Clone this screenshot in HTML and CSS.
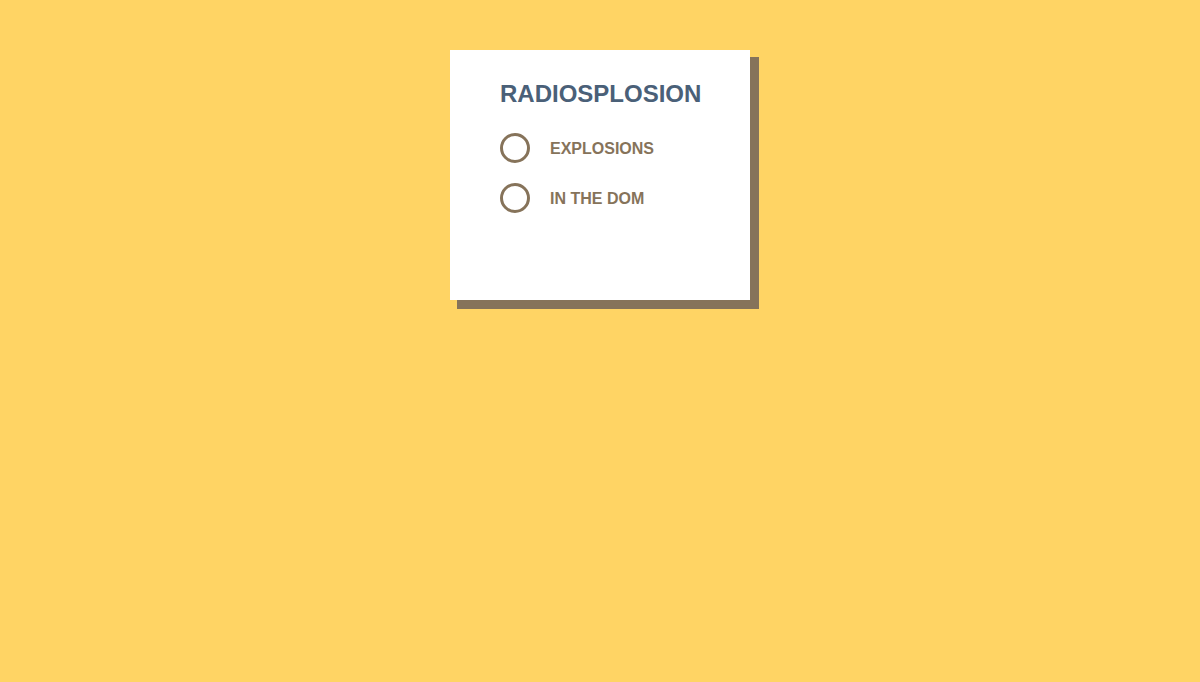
FILE: index.html
```html
<!DOCTYPE html>
<html>
<head>
<meta charset="utf-8">
<link rel="stylesheet" href="styles.css">
</head>
<body>
<div class="page">
  <div class="card">
    <h1 class="title">RADIOSPLOSION</h1>
    <div class="options">
      <label class="option"><span class="radio"></span><span class="label">EXPLOSIONS</span></label>
      <label class="option"><span class="radio"></span><span class="label">IN THE DOM</span></label>
    </div>
  </div>
</div>
</body>
</html>
```
FILE: styles.css
```css
html, body {
  margin: 0;
  padding: 0;
  background: #ffd464;
  font-family: "Liberation Sans", Arial, sans-serif;
}
.page {
  display: flex;
  justify-content: center;
  padding-top: 50px;
  height: 632px;
}
.card {
  width: 300px;
  height: 250px;
  box-sizing: border-box;
  background: #fff;
  padding: 30px 50px;
  box-shadow: 8px 8px 0 1px #86735a;
}
.title {
  margin: 0;
  font-size: 24px;
  line-height: 28px;
  font-weight: bold;
  color: #4a6078;
}
.options {
  margin-top: 25px;
  display: flex;
  flex-direction: column;
  gap: 20px;
}
.option {
  display: flex;
  align-items: center;
  height: 30px;
}
.radio {
  width: 30px;
  height: 30px;
  box-sizing: border-box;
  border: 3px solid #86735a;
  border-radius: 50%;
  margin-right: 20px;
}
.label {
  font-size: 16px;
  font-weight: bold;
  color: #86735a;
  padding-top: 2px;
}
```
